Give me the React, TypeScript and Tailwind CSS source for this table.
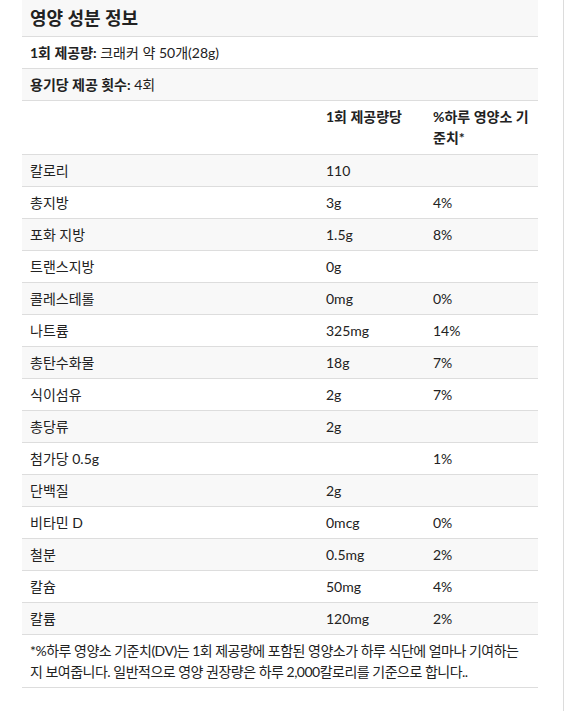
const rows: [string, string, string][] = [
  ["칼로리", "110", ""],
  ["총지방", "3g", "4%"],
  ["포화 지방", "1.5g", "8%"],
  ["트랜스지방", "0g", ""],
  ["콜레스테롤", "0mg", "0%"],
  ["나트륨", "325mg", "14%"],
  ["총탄수화물", "18g", "7%"],
  ["식이섬유", "2g", "7%"],
  ["총당류", "2g", ""],
  ["첨가당 0.5g", "", "1%"],
  ["단백질", "2g", ""],
  ["비타민 D", "0mcg", "0%"],
  ["철분", "0.5mg", "2%"],
  ["칼슘", "50mg", "4%"],
  ["칼륨", "120mg", "2%"],
]

const cell = "px-2 py-[5px] border-b border-[#dddddd]"

export default function App() {
  return (
    <div
      className="min-h-[711px] w-[564px] border-r border-[#dcdcdc] bg-white text-[#222] pl-[22px] pr-[25px]"
      style={{ fontFamily: "Lato, 'Noto Sans CJK KR', sans-serif" }}
    >
      <table className="w-[516px] table-fixed border-separate border-spacing-0 text-[14px] leading-[21px]">
        <colgroup>
          <col className="w-[296px]" />
          <col className="w-[107px]" />
          <col className="w-[113px]" />
        </colgroup>
        <tbody>
          <tr className="bg-[#f8f8f8]">
            <td colSpan={3} className={`${cell} text-[18px] leading-[26px] font-bold`}>
              영양 성분 정보
            </td>
          </tr>
          <tr>
            <td colSpan={3} className={cell}>
              <span className="font-bold">1회 제공량:</span> 크래커 약 50개(28g)
            </td>
          </tr>
          <tr className="bg-[#f8f8f8]">
            <td colSpan={3} className={cell}>
              <span className="font-bold">용기당 제공 횟수:</span> 4회
            </td>
          </tr>
          <tr>
            <td className={`${cell} pb-[6px]`}></td>
            <td className={`${cell} pb-[6px] align-top font-bold`}>1회 제공량당</td>
            <td className={`${cell} pb-[6px] align-top font-bold`}>%하루 영양소 기준치*</td>
          </tr>
          {rows.map(([name, amount, dv], i) => (
            <tr key={name} className={i % 2 === 0 ? "bg-[#f8f8f8]" : ""}>
              <td className={cell}>{name}</td>
              <td className={cell}>{amount}</td>
              <td className={cell}>{dv}</td>
            </tr>
          ))}
          <tr>
            <td colSpan={3} className={`${cell} break-all tracking-[-0.5px]`}>
              *%하루 영양소 기준치(DV)는 1회 제공량에 포함된 영양소가 하루 식단에 얼마나 기여하는지 보여줍니다. 일반적으로 영양 권장량은 하루 2,000칼로리를 기준으로 합니다..
            </td>
          </tr>
        </tbody>
      </table>
    </div>
  )
}
